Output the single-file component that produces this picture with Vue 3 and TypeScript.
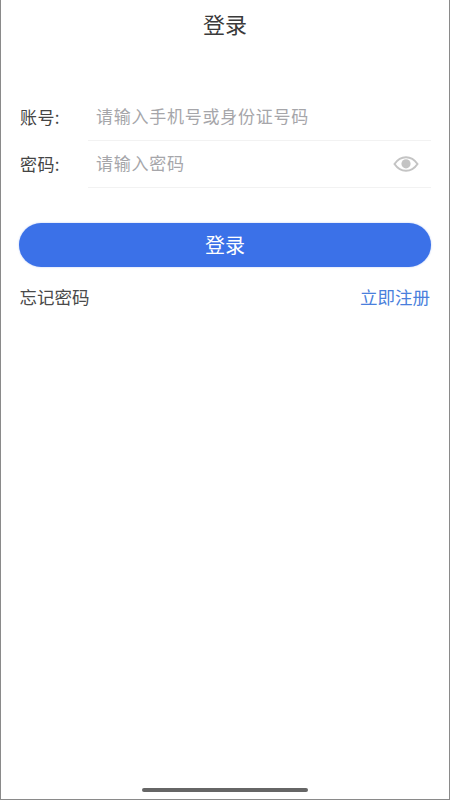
<script setup lang="ts">
interface Field {
  label: string
  placeholder: string
  eye: boolean
}
const fields: Field[] = [
  { label: '账号:', placeholder: '请输入手机号或身份证号码', eye: false },
  { label: '密码:', placeholder: '请输入密码', eye: true },
]
</script>

<template>
  <div class="page">
    <header class="title">登录</header>
    <section class="form">
      <div v-for="f in fields" :key="f.label" class="row">
        <span class="label">{{ f.label }}</span>
        <div class="field">
          <span class="placeholder">{{ f.placeholder }}</span>
          <svg v-if="f.eye" class="eye" viewBox="0 0 26 18" width="26" height="18">
            <path d="M1.5 9C4.5 4.6 8.5 2.2 13 2.2S21.5 4.6 24.5 9C21.5 13.4 17.5 15.8 13 15.8S4.5 13.4 1.5 9Z" fill="none" stroke="#c4c4c4" stroke-width="2" />
            <circle cx="13" cy="8.8" r="4.6" fill="#c4c4c4" />
          </svg>
        </div>
      </div>
    </section>
    <button class="submit" type="button">登录</button>
    <div class="links">
      <span class="forgot">忘记密码</span>
      <span class="register">立即注册</span>
    </div>
    <div class="spacer"></div>
    <div class="home"></div>
  </div>
</template>

<style>
html, body { margin: 0; background: #fff; }
</style>

<style scoped>
.page {
  box-sizing: border-box;
  width: 450px;
  height: 800px;
  display: flex;
  flex-direction: column;
  background: #fff;
  border: 1px solid #8a8a8a;
  border-top: none;
  font-family: "Noto Sans CJK SC", "Liberation Sans", sans-serif;
  overflow: hidden;
}
.title {
  height: 47px;
  line-height: 47px;
  text-align: center;
  font-size: 22px;
  color: #3a3a3a;
}
.form {
  margin-top: 47px;
  padding: 0 18px;
}
.row {
  display: flex;
  align-items: center;
  height: 47px;
}
.label {
  width: 68px;
  flex: none;
  margin-left: 1px;
  padding-bottom: 2px;
  font-size: 17px;
  letter-spacing: 0.4px;
  color: #444;
}
.field {
  flex: 1;
  height: 47px;
  box-sizing: border-box;
  display: flex;
  align-items: center;
  justify-content: space-between;
  padding: 0 12px 4px 8px;
  border-bottom: 1px solid #f2f2f2;
}
.placeholder {
  font-size: 17px;
  letter-spacing: 0.75px;
  color: #a6a6aa;
}
.eye { display: block; margin-top: 4px; }
.submit {
  display: block;
  box-sizing: border-box;
  margin: 35px 18px 0;
  width: 412px;
  height: 44px;
  border: none;
  border-radius: 22px;
  background: #3b71e8;
  box-shadow: 0 0 2px rgba(59, 113, 232, 0.4);
  color: #fff;
  font-family: inherit;
  font-size: 20px;
  padding: 0 0 2px;
}
.links {
  display: flex;
  justify-content: space-between;
  align-items: center;
  margin-top: 18px;
  padding: 0 19px 0 18.5px;
  font-size: 17.5px;
  line-height: 24px;
}
.forgot { color: #4a4a4a; }
.register { color: #4a7fdc; }
.spacer { flex: 1; }
.home {
  align-self: center;
  width: 166px;
  height: 4px;
  border-radius: 2px;
  background: #666;
  margin-bottom: 7px;
}
</style>
